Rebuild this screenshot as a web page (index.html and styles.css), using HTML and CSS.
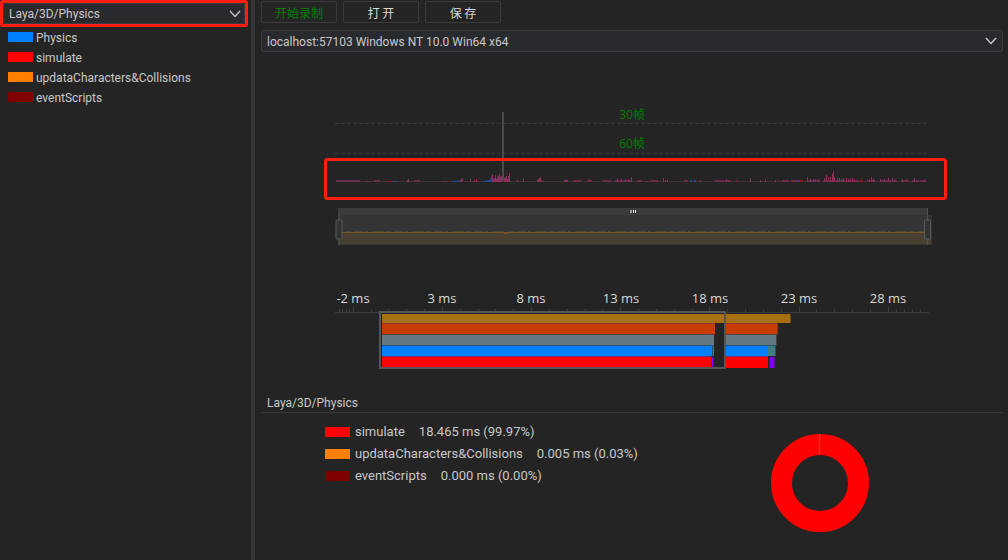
FILE: index.html
```html
<!DOCTYPE html>
<html lang="zh-CN">
<head>
<meta charset="utf-8">
<meta name="viewport" content="width=device-width, initial-scale=1">
<title>Profiler</title>
<link rel="stylesheet" href="styles.css">
</head>
<body>
<div class="app">
  <aside class="sidebar">
    <div class="sidebar-head">
      <div class="picker">
        <select class="picker-select" aria-label="Module">
          <option>Laya/3D/Physics</option>
        </select>
        <svg class="picker-arrow" viewBox="0 0 12 8" aria-hidden="true"><path d="M1 1L6 6.5L11 1"/></svg>
      </div>
    </div>
    <ul class="legend">
      <li class="legend-item"><span class="swatch blue"></span>Physics</li>
      <li class="legend-item"><span class="swatch red"></span>simulate</li>
      <li class="legend-item"><span class="swatch orange"></span>updataCharacters&amp;Collisions</li>
      <li class="legend-item"><span class="swatch maroon"></span>eventScripts</li>
    </ul>
  </aside>

  <main class="main">
    <div class="toolbar">
      <button class="btn btn-record" type="button">开始录制</button>
      <button class="btn" type="button">打 开</button>
      <button class="btn" type="button">保 存</button>
    </div>
    <div class="picker">
      <select class="picker-select" aria-label="Target">
        <option>localhost:57103 Windows NT 10.0 Win64 x64</option>
      </select>
      <svg class="picker-arrow" viewBox="0 0 12 8" aria-hidden="true"><path d="M1 1L6 6.5L11 1"/></svg>
    </div>

    <!-- Frame history and range slider -->
    <svg class="chart" viewBox="261 52 742 216" role="img" aria-label="Frame history">
      <g class="guide">
        <path d="M335 123.500H928"/>
        <path d="M335 153.500H928"/>
      </g>
      <text class="fps" x="632" y="119">30帧</text>
      <text class="fps" x="632" y="148">60帧</text>
      <path class="base" d="M336 181.500H927"/>
      <path class="spike-soft" d="M336 182v-2h24v2zM366 182v-1h5v1zM374 182v-2h6v2zM414 182v-2h6v2zM443 182v-1h4v1zM573 182v-2h8v2zM587 182v-2h5v2zM603 182v-2h8v2zM615 182v-2h16v2zM637 182v-2h5v2zM644 182v-1h5v1zM650 182v-2h8v2zM684 182v-2h4v2zM715 182v-2h16v2zM782 182v-2h7v2zM791 182v-2h9v2zM807 182v-2h13v2zM823 182v-2h36v2zM867 182v-2h8v2zM880 182v-2h17v2zM901 182v-2h8v2zM912 182v-2h7v2zM920 182v-2h6v2z"/>
      <path class="spike" d="M407.500 182v-2M408.500 182v-3M460.500 182v-2M461.500 182v-3M462.500 182v-4M470.500 182v-3M474.500 182v-2M476.500 182v-3M492.500 182v-8M493.500 182v-3M494.500 182v-4M495.500 182v-7M496.500 182v-3M497.500 182v-5M498.500 182v-6M499.500 182v-8M500.500 182v-5M501.500 182v-6M504.500 182v-4M505.500 182v-5M506.500 182v-6M507.500 182v-3M508.500 182v-6M509.500 182v-9M517.500 182v-2M523.500 182v-3M537.500 182v-2M538.500 182v-3M539.500 182v-4M540.500 182v-5M541.500 182v-2M543.500 182v-1M564.500 182v-2M565.500 182v-2M566.500 182v-3M567.500 182v-2M589.500 182v-3M617.500 182v-3M621.500 182v-3M625.500 182v-3M628.500 182v-3M631.500 182v-5M663.500 182v-4M665.500 182v-2M667.500 182v-2M700.500 182v-2M726.500 182v-3M750.500 182v-4M760.500 182v-2M765.500 182v-3M775.500 182v-2M807.500 182v-5M810.500 182v-3M813.500 182v-3M818.500 182v-3M824.500 182v-4M826.500 182v-7M828.500 182v-5M830.500 182v-5M832.500 182v-8M833.500 182v-11M834.500 182v-5M837.500 182v-4M839.500 182v-4M841.500 182v-3M843.500 182v-4M846.500 182v-4M848.500 182v-3M850.500 182v-3M852.500 182v-4M854.500 182v-3M869.500 182v-3M871.500 182v-5M873.500 182v-3M880.500 182v-3M884.500 182v-3M888.500 182v-4M892.500 182v-4M894.500 182v-3M902.500 182v-3M906.500 182v-3M914.500 182v-4M924.500 182v-3"/>
      <path class="spike-blue" d="M451 182l8-2v2zM393 181h4v1h-4zM480 182l8-2h2l2-5v7zM690 180h2v2h-2zM694 180h2v2h-2zM798 180h2v2h-2zM815 179h1v3h-1z"/>
      <path class="spike-red" d="M386 181h7v1h-7zM736 180h1v2h-1zM800 180h3v2h-3zM860 180h3v2h-3zM779 180h1v1h-1z"/>
      <path class="cursor" d="M503 112V181"/>
      <rect class="callout" x="325.500" y="159.500" width="620" height="39" rx="2"/>

      <rect class="range-top" x="338" y="208" width="590" height="7"/>
      <rect class="range-body" x="338" y="215" width="593" height="29"/>
      <rect class="range-fill" x="339" y="233" width="592" height="11"/>
      <path class="range-line" d="M340 232.500H924"/>
      <path class="range-noise" d="M346 231.500H504M509 231.500H924"/>
      <path class="range-line" d="M502 232l4 2 4-2"/>
      <path class="range-edge" d="M338 244.500H931M931.500 215V245"/>
      <path class="handle-line" d="M339 214V245M927.500 208V245"/>
      <rect class="handle" x="336" y="220" width="6" height="19" rx="1"/>
      <rect class="handle" x="924.500" y="220" width="6" height="19" rx="1"/>
      <path class="grip-soft" d="M630 210h2v3h-2z"/>
      <path class="grip" d="M633 210h1v3h-1zM635 210h1v3h-1z"/>
    </svg>

    <!-- Call timeline -->
    <svg class="chart" viewBox="261 268 742 118" role="img" aria-label="Call timeline">
      <g class="axis-label">
        <text x="353" y="303">-2 ms</text>
        <text x="442" y="303">3 ms</text>
        <text x="531" y="303">8 ms</text>
        <text x="621" y="303">13 ms</text>
        <text x="710" y="303">18 ms</text>
        <text x="799" y="303">23 ms</text>
        <text x="888" y="303">28 ms</text>
      </g>
      <path class="axis" d="M335 312.500H929M339.500 309v3M342.500 309v3M346.500 309v3M349.500 309v3M353.500 307v5M371.500 309v3M388.500 309v3M406.500 309v3M424.500 309v3M442.500 307v5M460.500 309v3M478.500 309v3M495.500 309v3M513.500 309v3M531.500 307v5M549.500 309v3M567.500 309v3M585.500 309v3M602.500 309v3M620.500 307v5M638.500 309v3M656.500 309v3M674.500 309v3M692.500 309v3M709.500 307v5M727.500 309v3M745.500 309v3M763.500 309v3M781.500 309v3M799.500 307v5M816.500 309v3M834.500 309v3M852.500 309v3M870.500 309v3M888.500 307v5M896.500 309v3M904.500 309v3M912.500 309v3M920.500 309v3"/>
      <g class="bars">
        <path fill="#a66f10" d="M382 314h408v9H382z"/>
        <path fill="#6b4d18" d="M790 314h1v9h-1z"/>
        <path fill="#8a3b20" d="M382 323h333v1H382zM726 323h51v1h-51zM777 324h1v10h-1z"/>
        <path fill="#c83c00" d="M382 324h333v10H382zM726 324h51v10h-51z"/>
        <path fill="#4a4544" d="M382 334h333v1H382zM726 334h51v1h-51zM776 335h1v10h-1z"/>
        <path fill="#647880" d="M382 335h332v10H382zM726 335h50v10h-50z"/>
        <path fill="#28506f" d="M382 345h332v1H382zM726 345h50v1h-50z"/>
        <path fill="#0080ff" d="M382 346h329v10H382zM726 346h42v10h-42z"/>
        <path fill="#408080" d="M711 346h3v10h-3zM768 346h7v10h-7z"/>
        <path fill="#27506d" d="M712 346h1v10h-1zM775 346h1v10h-1z"/>
        <path fill="#743570" d="M382 356h329v1H382zM726 356h42v1h-42z"/>
        <path fill="#ff0000" d="M382 357h329v10H382zM726 357h42v11h-42z"/>
        <path fill="#8000ff" d="M712 357h1v10h-1zM770 357h4v11h-4z"/>
        <path fill="#4d1680" d="M711 357h1v10h-1zM713 357h1v10h-1zM769 357h1v11h-1zM774 357h1v11h-1z"/>
      </g>
      <rect class="selection" x="380" y="312" width="345" height="56"/>
    </svg>

    <section class="details">
      <h2 class="details-title">Laya/3D/Physics</h2>
      <div class="details-body">
        <ul class="stats">
          <li class="stat"><span class="swatch red"></span><span>simulate</span><span class="stat-value">18.465 ms (99.97%)</span></li>
          <li class="stat"><span class="swatch orange"></span><span>updataCharacters&amp;Collisions</span><span class="stat-value">0.005 ms (0.03%)</span></li>
          <li class="stat"><span class="swatch maroon"></span><span>eventScripts</span><span class="stat-value">0.000 ms (0.00%)</span></li>
        </ul>
        <svg class="donut" viewBox="0 0 98 98" role="img" aria-label="Share of time">
          <circle cx="49" cy="49" r="38.500" fill="none" stroke="#ff0000" stroke-width="21"/>
          <path d="M48.500 0V21" stroke="#b86010"/>
        </svg>
      </div>
    </section>
  </main>
</div>
</body>
</html>
```
FILE: styles.css
```css
* {
  box-sizing: border-box;
}

body {
  margin: 0;
  background: #242424;
  color: #c8c8c8;
  font: 12px/20px Roboto, "Noto Sans CJK SC", sans-serif;
}

ul,
h2 {
  margin: 0;
  padding: 0;
  list-style: none;
  font: inherit;
}

.app {
  display: grid;
  grid-template-columns: 255px 1fr;
  min-height: 100vh;
}

.sidebar {
  border-right: 4px solid #363636;
}

.sidebar-head {
  margin-right: 3px;
  border: 3px solid #ff1e10;
  border-radius: 3px;
}

.sidebar-head .picker-select {
  height: 21px;
  padding-top: 0;
}

.sidebar-head .picker-arrow {
  right: 4px;
}

.picker {
  position: relative;
}

.picker-select {
  display: block;
  appearance: none;
  width: 100%;
  height: 22px;
  padding: 1px 24px 0 5px;
  border: 1px solid #3a3a3a;
  border-radius: 2px;
  background: #292a2e;
  color: inherit;
  font: inherit;
}

.picker-arrow {
  position: absolute;
  top: 7px;
  right: 6px;
  width: 12px;
  height: 8px;
  fill: none;
  stroke: #c8c8c8;
  stroke-width: 1.3;
  pointer-events: none;
}

.legend {
  padding: 1px 8px;
}

.legend-item {
  display: flex;
  align-items: center;
  gap: 3px;
}

.legend .swatch {
  margin-bottom: 2px;
}

.swatch {
  flex: none;
  width: 25px;
  height: 10px;
}

.blue { background: #0080ff; }
.red { background: #ff0000; }
.orange { background: #ff8000; }
.maroon { background: #800000; }

.main {
  min-width: 0;
  padding: 1px 5px 0 6px;
}

.toolbar {
  display: flex;
  gap: 6px;
  margin-bottom: 7px;
}

.btn {
  width: 76px;
  height: 22px;
  padding: 1px 0 0;
  border: 1px solid #3a3a3a;
  border-radius: 2px;
  background: #242424;
  color: #d8d8d8;
  font: 12px/19px "Noto Sans CJK SC", sans-serif;
}

.btn-record {
  color: #008000;
}

.chart {
  display: block;
  width: 100%;
}

.guide {
  fill: none;
  stroke: #3a3a3a;
  stroke-dasharray: 4 2;
}

.fps {
  fill: #008000;
  font-family: "Open Sans", "Noto Sans CJK SC", sans-serif;
  font-size: 12px;
  text-anchor: middle;
}

.base { stroke: #42303a; }
.spike-soft { fill: #7a2c50; opacity: 0.8; }
.spike { stroke: #86305a; }
.spike-blue { fill: #17508a; }
.spike-red { fill: #a01018; }

.cursor {
  stroke: #4a4a4a;
  stroke-width: 2;
}

.callout {
  fill: none;
  stroke: #ff1e10;
  stroke-width: 3;
}

.range-top { fill: #3a3b3b; }
.range-body { fill: #323435; }
.range-fill { fill: #4a4031; }
.range-line { fill: none; stroke: #76562a; }

.range-noise {
  stroke: #4f4531;
  stroke-dasharray: 5 3 9 2 3 4 12 2;
}

.range-edge {
  fill: none;
  stroke: #343434;
}

.handle-line {
  stroke: #505050;
}

.handle {
  fill: #323232;
  stroke: #585858;
}

.grip-soft { fill: #a0a0a0; }
.grip { fill: #ffffff; }

.axis-label {
  fill: #d8d8d8;
  font-family: "Open Sans", sans-serif;
  font-size: 13px;
  text-anchor: middle;
}

.axis {
  fill: none;
  stroke: #3c3c3c;
}

.bars {
  shape-rendering: crispEdges;
}

.selection {
  fill: none;
  stroke: #555555;
  stroke-width: 2;
}

.details-title {
  padding: 8px 6px 0;
  border-bottom: 1px solid #383838;
  line-height: 18px;
}

.details-body {
  display: grid;
  grid-template-columns: 1fr 1fr;
}

.stats {
  padding: 8px 0 0 64px;
  font-size: 13px;
  line-height: 22px;
  white-space: nowrap;
}

.stat {
  display: flex;
  align-items: center;
  gap: 5px;
}

.stat-value {
  margin-left: 9px;
}

.donut {
  width: 98px;
  height: 98px;
  margin-top: 21px;
  justify-self: center;
}
```
